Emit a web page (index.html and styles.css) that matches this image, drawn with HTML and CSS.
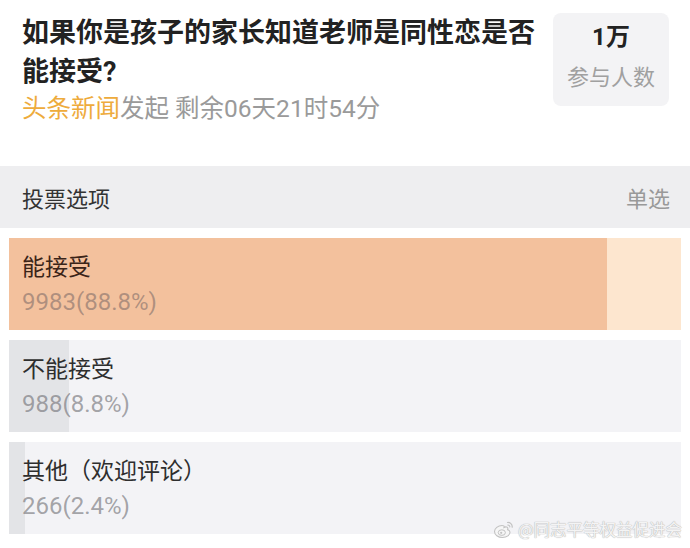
FILE: index.html
```html
<!DOCTYPE html>
<html lang="zh">
<head>
<meta charset="utf-8">
<link rel="stylesheet" href="styles.css">
</head>
<body>
<div class="page">
  <div class="top">
    <div class="info">
      <div class="title">如果你是孩子的家长知道老师是同性恋是否能接受?</div>
      <div class="meta"><span class="src">头条新闻</span>发起 剩余06天21时54分</div>
    </div>
    <div class="count-box">
      <div class="num">1万</div>
      <div class="lbl">参与人数</div>
    </div>
  </div>
  <div class="head">
    <span class="head-l">投票选项</span>
    <span class="head-r">单选</span>
  </div>
  <div class="options">
    <div class="opt opt-hot" style="--p: 89%">
      <div class="opt-name">能接受</div>
      <div class="opt-num">9983(88.8%)</div>
    </div>
    <div class="opt" style="--p: 9%">
      <div class="opt-name">不能接受</div>
      <div class="opt-num">988(8.8%)</div>
    </div>
    <div class="opt" style="--p: 2.4%">
      <div class="opt-name">其他（欢迎评论）</div>
      <div class="opt-num">266(2.4%)</div>
    </div>
  </div>
  <div class="mark">
    <svg class="weibo" width="22" height="20" viewBox="0 0 22 20">
      <path d="M9 6.5C5 6.5 1.5 9.5 1.5 12.5C1.5 15.8 5 18.5 9.5 18.5C14 18.5 17 16 17 13.3C17 11.6 15.6 11 14.6 10.7C15 9.6 15 8.4 13.6 8C12.6 7.7 11.4 8.2 11 8.4C11.6 6.8 10.5 6.5 9 6.5Z" fill="#f6f6f6" stroke="#c2c2c2" stroke-width="1.1"/>
      <ellipse cx="8.8" cy="13.6" rx="3.6" ry="2.8" fill="none" stroke="#c2c2c2" stroke-width="1"/>
      <circle cx="8.2" cy="13.8" r="1.1" fill="#c2c2c2"/>
      <path d="M14.5 3.5C17 3.2 19.5 5.2 19.2 8.2" fill="none" stroke="#c2c2c2" stroke-width="1.2" stroke-linecap="round"/>
      <path d="M14.8 6C16 5.9 17 6.9 16.8 8" fill="none" stroke="#c2c2c2" stroke-width="1.1" stroke-linecap="round"/>
    </svg>
    <span class="mark-text">@同志平等权益促进会</span>
  </div>
</div>
</body>
</html>
```
FILE: styles.css
```css
* { box-sizing: border-box; }
html, body { margin: 0; padding: 0; background: #fff; }
body {
  font-family: Roboto, "Noto Sans CJK SC", sans-serif;
  width: 690px;
  height: 548px;
  overflow: hidden;
}
.page { position: relative; width: 690px; height: 548px; }

.top {
  display: flex;
  gap: 10px;
  padding: 13px 21px 0 22px;
  height: 166px;
}
.info { flex: 1; }
.title {
  font-size: 27px;
  font-weight: 700;
  color: #222;
  line-height: 39px;
  margin-top: 1px;
}
.meta {
  font-size: 24.5px;
  line-height: 34px;
  color: #9a9a9a;
  margin-top: 0;
}
.src { color: #eeab3c; }

.count-box {
  width: 116px;
  height: 93px;
  background: #f3f3f5;
  border-radius: 8px;
  display: flex;
  flex-direction: column;
  align-items: center;
  padding-top: 8px;
}
.num {
  font-size: 24px;
  font-weight: 700;
  color: #222;
  line-height: 32px;
}
.lbl {
  font-size: 22px;
  color: #a0a0a0;
  line-height: 32px;
  margin-top: 9px;
}

.head {
  height: 62px;
  background: #eeeef0;
  display: flex;
  align-items: center;
  justify-content: space-between;
  padding: 0 20px 0 22px;
  font-size: 22px;
}
.head-l { color: #333; }
.head-r { color: #999; }

.options {
  display: flex;
  flex-direction: column;
  gap: 10px;
  padding: 10px 9px 0 9px;
}
.opt {
  height: 92px;
  padding: 13px 13px 0 13px;
  background: linear-gradient(to right, #e3e4e7 0, #e3e4e7 var(--p), #f3f3f6 var(--p), #f3f3f6 100%);
}
.opt-hot {
  background: linear-gradient(to right, #f3c19d 0, #f3c19d var(--p), #fde6cf var(--p), #fde6cf 100%);
}
.opt-name {
  font-size: 23px;
  color: #2e2e2e;
  line-height: 34px;
}
.opt-num {
  font-size: 24px;
  color: rgba(110, 110, 115, 0.62);
  line-height: 34px;
}
.opt-hot .opt-name { color: #3a2418; }
.opt-hot .opt-num { color: rgba(130, 110, 105, 0.6); }

.mark {
  position: absolute;
  right: 8px;
  bottom: 7px;
  display: flex;
  align-items: center;
  gap: 3px;
}
.mark-text {
  font-size: 16.5px;
  color: #f4f4f4;
  font-family: "Noto Sans CJK SC", sans-serif;
  text-shadow: 0 0 1px #b4b4b4, 0 0 1px #b4b4b4;
}
```
